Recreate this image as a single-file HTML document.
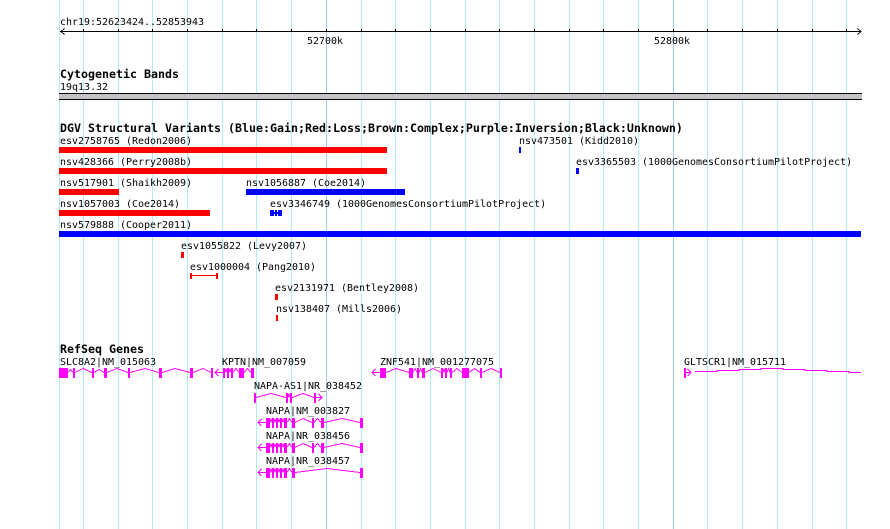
<!DOCTYPE html>
<html><head><meta charset="utf-8"><style>
html,body{margin:0;padding:0;background:#fff}
svg{display:block}
text{font-family:"DejaVu Sans Mono","Liberation Mono",monospace;font-size:9.97px;fill:#000;white-space:pre}
.b{font-weight:bold;font-size:11.63px}
.g{stroke:#afeeee;stroke-width:1}
.m{stroke:#a0cbe8;stroke-width:1}
.c rect,.c path{shape-rendering:crispEdges}
.x{fill:#f0f}
.i{fill:none;stroke:#f0f;stroke-width:1}
</style></head><body>
<svg width="890" height="529" viewBox="0 0 890 529" xmlns="http://www.w3.org/2000/svg" class="c">
<rect width="890" height="529" fill="#fff"/>
<path class="g" d="M59.5 0V529M83.5 0V529M118.5 0V529M152.5 0V529M187.5 0V529M222.5 0V529M256.5 0V529M291.5 0V529M361.5 0V529M395.5 0V529M430.5 0V529M465.5 0V529M499.5 0V529M534.5 0V529M569.5 0V529M603.5 0V529M638.5 0V529M707.5 0V529M742.5 0V529M777.5 0V529M812.5 0V529M846.5 0V529"/>
<path class="m" d="M326.5 0V529M673.5 0V529"/>

<text x="60" y="25">chr19:52623424..52853943</text>
<path fill="none" stroke="#000" d="M60 31.5H861M64.5 28.5L61 31.5L64.5 34.5M857.5 28.5L861 31.5L857.5 34.5M83.5 29V32M118.5 29V32M152.5 29V32M187.5 29V32M222.5 29V32M256.5 29V32M291.5 29V32M326.5 29V32M361.5 29V32M395.5 29V32M430.5 29V32M465.5 29V32M499.5 29V32M534.5 29V32M569.5 29V32M603.5 29V32M638.5 29V32M673.5 29V32M707.5 29V32M742.5 29V32M777.5 29V32M812.5 29V32M846.5 29V32"/>
<text x="307" y="44">52700k</text>
<text x="654" y="44">52800k</text>

<text class="b" x="60" y="78">Cytogenetic Bands</text>
<text x="60" y="90">19q13.32</text>
<rect x="59" y="93" width="803" height="7" fill="#000"/>
<rect x="59" y="94" width="803" height="5" fill="#c4c0c4"/>

<text class="b" x="60" y="132">DGV Structural Variants (Blue:Gain;Red:Loss;Brown:Complex;Purple:Inversion;Black:Unknown)</text>
<text x="60" y="144">esv2758765 (Redon2006)</text>
<rect x="59" y="147" width="328" height="6" fill="#f00"/>
<text x="519" y="144">nsv473501 (Kidd2010)</text>
<rect x="519" y="147" width="2" height="6" fill="#00f"/>
<text x="60" y="165">nsv428366 (Perry2008b)</text>
<rect x="59" y="168" width="328" height="6" fill="#f00"/>
<text x="576" y="165">esv3365503 (1000GenomesConsortiumPilotProject)</text>
<rect x="576" y="168" width="3" height="6" fill="#00f"/>
<text x="60" y="186">nsv517901 (Shaikh2009)</text>
<rect x="59" y="189" width="60" height="6" fill="#f00"/>
<text x="246" y="186">nsv1056887 (Coe2014)</text>
<rect x="246" y="189" width="159" height="6" fill="#00f"/>
<text x="60" y="207">nsv1057003 (Coe2014)</text>
<rect x="59" y="210" width="151" height="6" fill="#f00"/>
<text x="270" y="207">esv3346749 (1000GenomesConsortiumPilotProject)</text>
<rect x="270" y="210" width="4" height="6" fill="#00f"/><rect x="275" y="210" width="2" height="6" fill="#00f"/><rect x="278" y="210" width="4" height="6" fill="#00f"/><rect x="270" y="212" width="12" height="2" fill="#00f"/>
<text x="60" y="228">nsv579888 (Cooper2011)</text>
<rect x="59" y="231" width="802" height="6" fill="#00f"/>
<text x="181" y="249">esv1055822 (Levy2007)</text>
<rect x="181" y="252" width="3" height="6" fill="#f00"/>
<text x="190" y="270">esv1000004 (Pang2010)</text>
<rect x="190" y="273" width="2" height="6" fill="#f00"/><rect x="216" y="273" width="2" height="6" fill="#f00"/><rect x="190" y="275" width="28" height="1" fill="#f00"/>
<text x="275" y="291">esv2131971 (Bentley2008)</text>
<rect x="275" y="294" width="3" height="6" fill="#f00"/>
<text x="276" y="312">nsv138407 (Mills2006)</text>
<rect x="276" y="315" width="2" height="6" fill="#f00"/>

<text class="b" x="60" y="353">RefSeq Genes</text>
<text x="60" y="365">SLC8A2|NM_015063</text>
<text x="222" y="365">KPTN|NM_007059</text>
<text x="380" y="365">ZNF541|NM_001277075</text>
<text x="684" y="365">GLTSCR1|NM_015711</text>
<text x="254" y="389">NAPA-AS1|NR_038452</text>
<text x="266" y="414">NAPA|NM_003827</text>
<text x="266" y="439">NAPA|NR_038456</text>
<text x="266" y="464">NAPA|NR_038457</text>

<!-- SLC8A2 -->
<path class="x" d="M59 368h9v10h-9zM73 368h2v10h-2zM92 368h2v10h-2zM104 368h3v10h-3zM128 368h2v10h-2zM159 368h3v10h-3zM190 368h3v10h-3zM211 368h2v10h-2z"/>
<path class="i" d="M68 372.5L70.5 369.5L73 372.5M75 372.5L83 368.5L92 372.5M94 372.5L99 369.5L104 372.5M107 372.5L117 368.5L128 372.5M130 372.5L145 368.5L159 372.5M162 372.5L175 368.5L190 372.5M193 372.5L203 368.5L211 372.5"/>
<!-- KPTN -->
<path class="x" d="M223 368h2v10h-2zM227 368h2v10h-2zM231 368h2v10h-2zM239 368h5v10h-5zM251 368h3v10h-3z"/>
<path class="i" d="M215 372.5H223M218.5 369L215 372.5L218.5 376M225 372.5L226 368.5L227 372.5M229 372.5L230 368.5L231 372.5M233 372.5L236 368.5L239 372.5M244 372.5L247.5 368.5L251 372.5"/>
<!-- ZNF541 -->
<path class="x" d="M380 368h6v10h-6zM409 368h4v10h-4zM417 368h2v10h-2zM422 368h3v10h-3zM441 368h2v10h-2zM445 368h2v10h-2zM450 368h2v10h-2zM462 368h7v10h-7zM480 368h2v10h-2zM500 368h2v10h-2z"/>
<path class="i" d="M372 372.5H380M375.5 369L372 372.5L375.5 376M386 372.5L396 368.5L409 372.5M413 372.5L415 368.5L417 372.5M419 372.5L420.5 368.5L422 372.5M425 372.5L433 368.5L441 372.5M443 372.5L444 368.5L445 372.5M447 372.5L448.5 368.5L450 372.5M452 372.5L457 368.5L462 372.5M469 372.5L474.5 368.5L480 372.5M482 372.5L491 368.5L500 372.5"/>
<!-- GLTSCR1 -->
<path class="x" d="M684 368h2v10h-2z"/>
<path class="i" d="M686 372.5H691M687.5 369L691 372.5L687.5 376M695 371.5H717V370.5H739V369.5H761V368.5H783V369.5H805V370.5H827V371.5H849V372.5H861"/>
<!-- NAPA-AS1 -->
<path class="x" d="M254 393h2v10h-2zM286 393h2v10h-2zM290 393h2v10h-2zM314 393h2v10h-2z"/>
<path class="i" d="M256 397.5L271 393.5L286 397.5M288 397.5L289 393.5L290 397.5M292 397.5L303 393.5L314 397.5M316 397.5H322M318.5 394L322 397.5L318.5 401"/>
<!-- NAPA NM_003827 -->
<path class="x" d="M266 418h4v10h-4zM272 418h2v10h-2zM276 418h2v10h-2zM280 418h2v10h-2zM284 418h3v10h-3zM292 418h3v10h-3zM312 418h2v10h-2zM321 418h3v10h-3zM360 418h3v10h-3z"/>
<path class="i" d="M258 422.5H266M261.5 419L258 422.5L261.5 426M270 422.5L271 418.5L272 422.5M274 422.5L275 418.5L276 422.5M278 422.5L279 418.5L280 422.5M282 422.5L283 418.5L284 422.5M287 422.5L289.5 418.5L292 422.5M295 422.5L303 418.5L312 422.5M314 422.5L317.5 418.5L321 422.5M324 422.5L342 418.5L360 422.5"/>
<!-- NAPA NR_038456 -->
<path class="x" d="M266 443h4v10h-4zM272 443h2v10h-2zM276 443h2v10h-2zM280 443h2v10h-2zM284 443h3v10h-3zM292 443h3v10h-3zM312 443h2v10h-2zM321 443h3v10h-3zM360 443h3v10h-3z"/>
<path class="i" d="M258 447.5H266M261.5 444L258 447.5L261.5 451M270 447.5L271 443.5L272 447.5M274 447.5L275 443.5L276 447.5M278 447.5L279 443.5L280 447.5M282 447.5L283 443.5L284 447.5M287 447.5L289.5 443.5L292 447.5M295 447.5L303 443.5L312 447.5M314 447.5L317.5 443.5L321 447.5M324 447.5L342 443.5L360 447.5"/>
<!-- NAPA NR_038457 -->
<path class="x" d="M266 468h4v10h-4zM272 468h2v10h-2zM276 468h2v10h-2zM280 468h2v10h-2zM284 468h3v10h-3zM292 468h3v10h-3zM360 468h3v10h-3z"/>
<path class="i" d="M258 472.5H266M261.5 469L258 472.5L261.5 476M270 472.5L271 468.5L272 472.5M274 472.5L275 468.5L276 472.5M278 472.5L279 468.5L280 472.5M282 472.5L283 468.5L284 472.5M287 472.5L289.5 468.5L292 472.5M295 472.5L327 468.5L360 472.5"/>
</svg>
</body></html>
